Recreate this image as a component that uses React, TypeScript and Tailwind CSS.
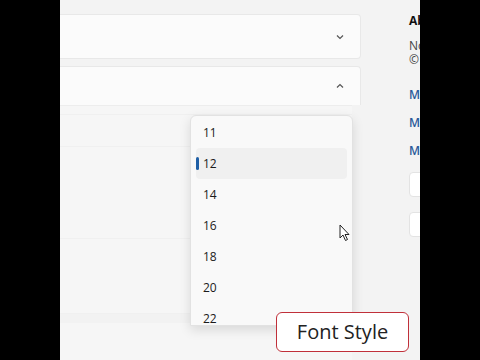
import React from "react";

const sizes = ["11", "12", "14", "16", "18", "20", "22"];

export default function App() {
  return (
    <div className="w-[480px] h-[360px] flex overflow-hidden" style={{ fontFamily: '"Open Sans", "Noto Sans", sans-serif' }}>
      <div className="w-[60px] h-full bg-black shrink-0" />
      <div className="relative w-[360px] h-full bg-[#f3f3f3] flex overflow-hidden">
        {/* main column */}
        <div className="w-[301px] shrink-0 flex flex-col pt-[14px]">
          <div className="h-[45px] bg-[#fbfbfb] border border-l-0 border-[#e8e8e8] rounded-r-[4px] flex items-center justify-end pr-[15px]">
            <svg width="10" height="10" viewBox="0 0 10 10" fill="none" stroke="#555" strokeWidth="1.2">
              <path d="M2 3.5 L5 6.5 L8 3.5" />
            </svg>
          </div>
          <div className="mt-[7px] h-[39px] bg-[#fbfbfb] border border-l-0 border-b-0 border-[#e8e8e8] rounded-tr-[4px] flex items-center justify-end pr-[15px]">
            <svg width="10" height="10" viewBox="0 0 10 10" fill="none" stroke="#555" strokeWidth="1.2">
              <path d="M2 6.5 L5 3.5 L8 6.5" />
            </svg>
          </div>
          <div className="w-[292px] flex-1 bg-[#f6f6f6] border-t border-[#ededed] flex flex-col">
            <div className="h-[8px]" />
            <div className="h-[32px] border-t border-[#f0f0f0]" />
            <div className="h-[92px] border-t border-[#f0f0f0]" />
            <div className="h-[75px] border-t border-[#f0f0f0]" />
            <div className="h-[10px] border-t border-[#f0f0f0] bg-[#f2f2f2]" />
          </div>
        </div>
        {/* right column */}
        <div className="ml-[48px] pt-[13px] flex flex-col w-[120px] shrink-0 text-[12px] whitespace-nowrap">
          <div className="font-bold text-[#111] leading-[16px]">About</div>
          <div className="mt-[10px] text-[#444] leading-[14px]">Notepad</div>
          <div className="text-[#444] leading-[14px]">© 2024</div>
          <div className="mt-[20px] font-semibold text-[#2a5a9a] leading-[16px]">Microsoft</div>
          <div className="mt-[12px] font-semibold text-[#2a5a9a] leading-[16px]">Microsoft</div>
          <div className="mt-[12px] font-semibold text-[#2a5a9a] leading-[16px]">Microsoft</div>
          <div className="mt-[13px] h-[25px] bg-white border border-[#e3e3e3] rounded-[4px]" />
          <div className="mt-[15px] h-[25px] bg-white border border-[#e3e3e3] rounded-[4px]" />
        </div>

        {/* dropdown */}
        <div className="absolute left-[130px] top-[115px] w-[163px] h-[211px] bg-[#f9f9f9] border border-[#e2e2e2] rounded-t-[6px] shadow-[0_4px_12px_rgba(0,0,0,0.12)] flex flex-col pt-[1px] px-[5px]">
          {sizes.map((s) => (
            <div
              key={s}
              className={`relative h-[31px] shrink-0 flex items-center pl-[7px] text-[12px] text-[#1b1b1b] rounded-[4px] ${s === "12" ? "bg-[#f0f0f0]" : ""}`}
            >
              {s === "12" && <div className="absolute left-0 top-[9px] w-[3px] h-[13px] rounded-full bg-[#1f5fa6]" />}
              {s}
            </div>
          ))}
        </div>

        {/* cursor */}
        <svg className="absolute left-[279px] top-[224px]" width="12" height="18" viewBox="0 0 12 18">
          <path d="M1 1 L1 14 L4 11 L6.5 16.5 L8.5 15.5 L6 10.5 L10 10.5 Z" fill="white" stroke="#222" strokeWidth="1" strokeLinejoin="round" />
        </svg>

        {/* Font Style badge */}
        <div className="absolute left-[216px] top-[312px] w-[133px] h-[40px] bg-white border border-[#c0303a] rounded-[6px] flex items-center justify-center text-[20px] text-[#222]" style={{ fontFamily: '"Open Sans", "Noto Sans", sans-serif' }}>
          Font Style
        </div>
      </div>
      <div className="w-[60px] h-full bg-black shrink-0" />
    </div>
  );
}
